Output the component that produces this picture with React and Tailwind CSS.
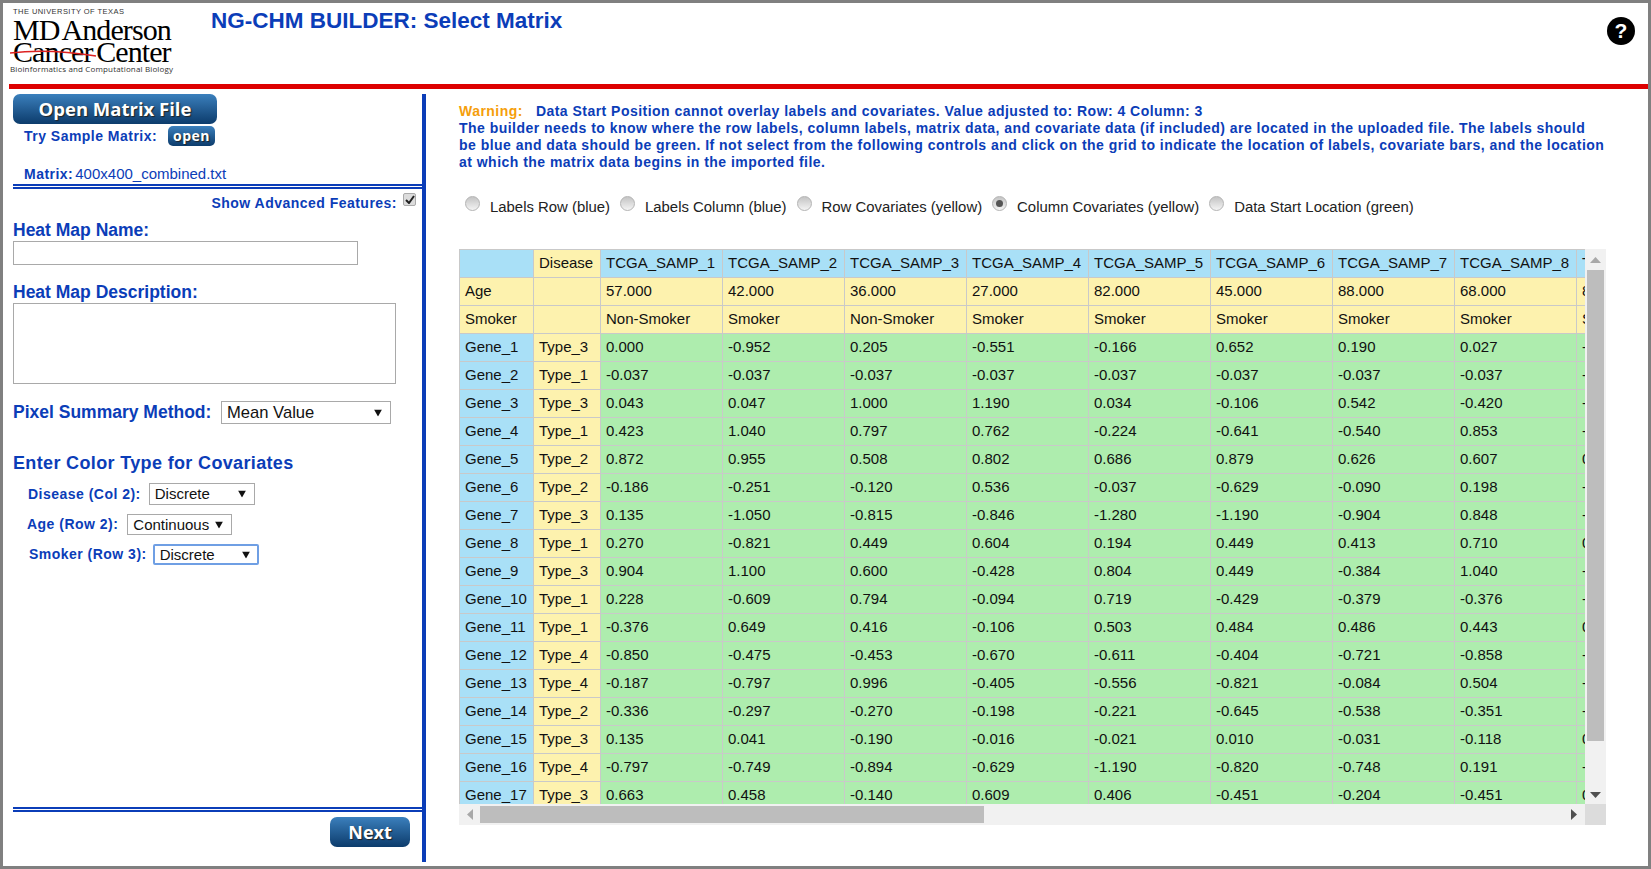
const headers = ["TCGA_SAMP_1", "TCGA_SAMP_2", "TCGA_SAMP_3", "TCGA_SAMP_4", "TCGA_SAMP_5", "TCGA_SAMP_6", "TCGA_SAMP_7", "TCGA_SAMP_8", "TCGA_SAMP_9"];
const age = ["57.000", "42.000", "36.000", "27.000", "82.000", "45.000", "88.000", "68.000", "81.000"];
const smoker = ["Non-Smoker", "Smoker", "Non-Smoker", "Smoker", "Smoker", "Smoker", "Smoker", "Smoker", "Smoker"];

const genes = [
  ["Type_3", "0.000", "-0.952", "0.205", "-0.551", "-0.166", "0.652", "0.190", "0.027", "-0.310"],
  ["Type_1", "-0.037", "-0.037", "-0.037", "-0.037", "-0.037", "-0.037", "-0.037", "-0.037", "-0.037"],
  ["Type_3", "0.043", "0.047", "1.000", "1.190", "0.034", "-0.106", "0.542", "-0.420", "-0.212"],
  ["Type_1", "0.423", "1.040", "0.797", "0.762", "-0.224", "-0.641", "-0.540", "0.853", "-0.145"],
  ["Type_2", "0.872", "0.955", "0.508", "0.802", "0.686", "0.879", "0.626", "0.607", "0.731"],
  ["Type_2", "-0.186", "-0.251", "-0.120", "0.536", "-0.037", "-0.629", "-0.090", "0.198", "-0.402"],
  ["Type_3", "0.135", "-1.050", "-0.815", "-0.846", "-1.280", "-1.190", "-0.904", "0.848", "-0.763"],
  ["Type_1", "0.270", "-0.821", "0.449", "0.604", "0.194", "0.449", "0.413", "0.710", "0.322"],
  ["Type_3", "0.904", "1.100", "0.600", "-0.428", "0.804", "0.449", "-0.384", "1.040", "-0.257"],
  ["Type_1", "0.228", "-0.609", "0.794", "-0.094", "0.719", "-0.429", "-0.379", "-0.376", "-0.188"],
  ["Type_1", "-0.376", "0.649", "0.416", "-0.106", "0.503", "0.484", "0.486", "0.443", "0.275"],
  ["Type_4", "-0.850", "-0.475", "-0.453", "-0.670", "-0.611", "-0.404", "-0.721", "-0.858", "-0.539"],
  ["Type_4", "-0.187", "-0.797", "0.996", "-0.405", "-0.556", "-0.821", "-0.084", "0.504", "-0.366"],
  ["Type_2", "-0.336", "-0.297", "-0.270", "-0.198", "-0.221", "-0.645", "-0.538", "-0.351", "-0.429"],
  ["Type_3", "0.135", "0.041", "-0.190", "-0.016", "-0.021", "0.010", "-0.031", "-0.118", "0.084"],
  ["Type_4", "-0.797", "-0.749", "-0.894", "-0.629", "-1.190", "-0.820", "-0.748", "0.191", "-0.612"],
  ["Type_3", "0.663", "0.458", "-0.140", "0.609", "0.406", "-0.451", "-0.204", "-0.451", "0.117"],
];

const Cell = ({ color, children }) => (
  <td className={`${color} h-[28px] border border-[#c9c9c9] px-[5px] overflow-hidden whitespace-nowrap`}>{children}</td>
);

const Radio = ({ label, checked }) => (
  <>
    <span className="w-[15px] h-[15px] mb-[7px] shrink-0 rounded-full border border-[#b4b4b4] bg-gradient-to-b from-[#c4c4c4] to-[#f4f4f4] flex items-center justify-center">
      {checked && <span className="w-[7px] h-[7px] rounded-full bg-[#555]" />}
    </span>
    <span className="whitespace-nowrap">{label}</span>
  </>
);

const Select = ({ value, className, arrow = "right-[8px]", size = "text-[15px]" }) => (
  <div className={`relative shrink-0 font-normal tracking-normal ${className}`}>
    <select
      defaultValue={value}
      className={`block appearance-none w-full h-full bg-white pl-[5px] ${size} leading-[18px] text-[#111] outline-none`}
    >
      <option>{value}</option>
    </select>
    <svg className={`absolute ${arrow} top-1/2 -translate-y-1/2`} width="8" height="7" viewBox="0 0 8 7">
      <path d="M0 0h8L4 7z" fill="#111" />
    </svg>
  </div>
);

const DoubleLine = () => <div className="h-[5px] border-y-2 border-[#0b3db8]" />;

const BlueButton = ({ children, className }) => (
  <button className={`bg-gradient-to-b from-[#3b80bd] to-[#0c3c6c] text-white font-bold font-['Open_Sans',sans-serif] [text-shadow:1px_1px_1px_#222] ${className}`}>
    {children}
  </button>
);

const App = () => {
  return (
    <div className="w-[1651px] h-[869px] border-[3px] border-[#808080] bg-white flex flex-col overflow-hidden font-['Liberation_Sans',Arial,sans-serif] text-[15px] text-[#222]">
      {/* header */}
      <div className="h-[81px] flex shrink-0">
        <div className="relative w-[201px] ml-[7px] text-black">
          <div className="pl-[3px] pt-[5px] h-[15px] text-[7.5px] leading-[8px] tracking-[0.45px] text-[#333] whitespace-nowrap">THE UNIVERSITY OF TEXAS</div>
          <div className="pl-[3px] h-[24px] font-['Liberation_Serif',serif] text-[30px] leading-[24px] tracking-[-0.9px] [word-spacing:-3px] whitespace-nowrap">MD Anderson</div>
          <div className="pl-[3px] h-[20px] font-['Liberation_Serif',serif] text-[30px] leading-[20px] tracking-[-0.9px] [word-spacing:-3px] whitespace-nowrap">Cancer Center</div>
          <div className="mt-[2px] text-[8px] leading-[9px] tracking-[0.15px] text-[#333] whitespace-nowrap font-['Open_Sans',sans-serif]">Bioinformatics and Computational Biology</div>
          <svg className="absolute left-0 top-[46px]" width="90" height="10" viewBox="0 0 90 10">
            <path d="M0 4 C 25 1, 55 2, 86 7" stroke="#d22" strokeWidth="1.6" fill="none" />
          </svg>
        </div>
        <h1 className="h-[36px] leading-[36px] text-[22.5px] font-bold text-[#0b3db8] whitespace-nowrap">NG-CHM BUILDER: Select Matrix</h1>
        <div className="ml-auto mr-[13px] mt-[14px] w-[28px] h-[28px] rounded-full bg-black text-white flex items-center justify-center font-bold text-[21px]">?</div>
      </div>
      <div className="ml-[6px] h-[5px] bg-[#dd0000] shrink-0" />

      <div className="flex flex-1 min-h-0">
        {/* left panel */}
        <aside className="w-[423px] shrink-0 mt-[5px] mb-[4px] border-r-4 border-[#0b3db8] pl-[10px] flex flex-col text-[#0b3db8] font-bold">
          <BlueButton className="w-[204px] h-[30px] rounded-[7px] text-[18.5px] leading-[30px]">Open Matrix File</BlueButton>
          <div className="mt-[2px] h-[20px] pl-[11px] flex items-center text-[14px] tracking-[0.48px]">
            <span className="w-[144px]">Try Sample Matrix:</span>
            <BlueButton className="w-[47px] h-[20px] rounded-[5px] text-[14px] leading-[20px]">open</BlueButton>
          </div>
          <div className="mt-[18px] h-[20px] pl-[11px] flex items-center text-[14px] gap-[2px]">
            <span className="tracking-[0.48px]">Matrix:</span>
            <span className="font-normal text-[15px]">400x400_combined.txt</span>
          </div>
          <DoubleLine />
          <div className="h-[28px] pr-[6px] flex items-center justify-end text-[14px] tracking-[0.48px]">
            <span>Show Advanced Features:</span>
            <span className="ml-[6px] mb-[7px] w-[13px] h-[13px] rounded-[2px] border border-[#aaa] bg-[#dcdcdc] flex items-center justify-center">
              <svg width="10" height="9" viewBox="0 0 10 9">
                <path d="M1 5l3 3 5-7" stroke="#222" strokeWidth="2" fill="none" />
              </svg>
            </span>
          </div>
          <label className="h-[24px] leading-[26px] text-[17.5px]">Heat Map Name:</label>
          <input className="w-[345px] h-[24px] border border-[#a9a9a9] bg-white outline-none" />
          <label className="mt-[15px] h-[23px] leading-[25px] text-[17.5px]">Heat Map Description:</label>
          <textarea className="w-[383px] h-[81px] border border-[#a9a9a9] bg-white outline-none resize-none" />
          <div className="mt-[17px] h-[23px] flex items-center text-[17.5px]">
            <span className="w-[208px] whitespace-nowrap">Pixel Summary Method:</span>
            <Select value="Mean Value" size="text-[16.6px]" className="w-[170px] h-[23px] border border-[#a9a9a9]" />
          </div>
          <div className="mt-[27px] h-[24px] leading-[24px] text-[18px] tracking-[0.35px]">Enter Color Type for Covariates</div>
          <div className="mt-[8px] h-[22px] pl-[15px] flex items-center gap-[8px] text-[14px] tracking-[0.48px]">
            <span className="whitespace-nowrap">Disease (Col 2):</span>
            <Select value="Discrete" className="w-[106px] h-[22px] border border-[#a9a9a9]" />
          </div>
          <div className="mt-[9px] h-[21px] pl-[14px] flex items-center gap-[9px] text-[14px] tracking-[0.48px]">
            <span className="whitespace-nowrap">Age (Row 2):</span>
            <Select value="Continuous" className="w-[105px] h-[21px] border border-[#a9a9a9]" />
          </div>
          <div className="mt-[9px] h-[21px] pl-[16px] flex items-center gap-[6px] text-[14px] tracking-[0.48px]">
            <span className="whitespace-nowrap">Smoker (Row 3):</span>
            <Select value="Discrete" arrow="right-[7px]" className="w-[106px] h-[21px] border-2 border-[#6f9fe4] rounded-[2px]" />
          </div>
          <div className="flex-1" />
          <DoubleLine />
          <div className="mt-[5px] mb-[15px] pr-[12px] flex justify-end">
            <BlueButton className="w-[80px] h-[30px] rounded-[7px] text-[18px] leading-[30px]">Next</BlueButton>
          </div>
        </aside>

        {/* right panel */}
        <main className="flex-1 min-w-0 pl-[33px] pt-[14px]">
          <div className="text-[14px] leading-[17px] font-bold text-[#0b3db8] tracking-[0.47px] whitespace-nowrap">
            <div>
              <span className="text-[#f59e0b] mr-[13px]">Warning:</span>
              Data Start Position cannot overlay labels and covariates. Value adjusted to: Row: 4 Column: 3
            </div>
            <div>The builder needs to know where the row labels, column labels, matrix data, and covariate data (if included) are located in the uploaded file. The labels should</div>
            <div>be blue and data should be green. If not select from the following controls and click on the grid to indicate the location of labels, covariate bars, and the location</div>
            <div>at which the matrix data begins in the imported file.</div>
          </div>

          <div className="mt-[25px] h-[22px] pl-[6px] flex items-center gap-[10px] text-[14.9px]">
            <Radio label="Labels Row (blue)" />
            <Radio label="Labels Column (blue)" />
            <Radio label="Row Covariates (yellow)" />
            <Radio label="Column Covariates (yellow)" checked />
            <Radio label="Data Start Location (green)" />
          </div>

          <div className="mt-[31px] w-[1147px]">
            <div className="flex h-[555px]">
              <div className="w-[1126px] h-full overflow-hidden">
                <table className="table-fixed border-collapse w-[1239px] text-[15px] text-[#111]">
                  <colgroup>
                    <col className="w-[74px]" />
                    <col className="w-[67px]" />
                    {headers.map((h) => (
                      <col key={h} className="w-[122px]" />
                    ))}
                  </colgroup>
                  <tbody>
                    <tr>
                      <Cell color="bg-[#a9e0f7]" />
                      <Cell color="bg-[#fdf2ae]">Disease</Cell>
                      {headers.map((h) => (
                        <Cell key={h} color="bg-[#a9e0f7]">{h}</Cell>
                      ))}
                    </tr>
                    <tr>
                      <Cell color="bg-[#fdf2ae]">Age</Cell>
                      <Cell color="bg-[#fdf2ae]" />
                      {age.map((a, i) => (
                        <Cell key={i} color="bg-[#fdf2ae]">{a}</Cell>
                      ))}
                    </tr>
                    <tr>
                      <Cell color="bg-[#fdf2ae]">Smoker</Cell>
                      <Cell color="bg-[#fdf2ae]" />
                      {smoker.map((s, i) => (
                        <Cell key={i} color="bg-[#fdf2ae]">{s}</Cell>
                      ))}
                    </tr>
                    {genes.map((row, i) => (
                      <tr key={i}>
                        <Cell color="bg-[#a9e0f7]">Gene_{i + 1}</Cell>
                        <Cell color="bg-[#fdf2ae]">{row[0]}</Cell>
                        {row.slice(1).map((v, j) => (
                          <Cell key={j} color="bg-[#aeedae]">{v}</Cell>
                        ))}
                      </tr>
                    ))}
                  </tbody>
                </table>
              </div>
              {/* vertical scrollbar */}
              <div className="w-[21px] bg-[#f1f1f1] flex flex-col items-center">
                <div className="h-[21px] flex items-center justify-center">
                  <svg width="11" height="6" viewBox="0 0 11 6"><path d="M5.5 0L11 6H0z" fill="#a8a8a8" /></svg>
                </div>
                <div className="w-[17px] h-[471px] bg-[#bdbdbd]" />
                <div className="flex-1 w-full flex items-end justify-center pb-[6px]">
                  <svg width="11" height="6" viewBox="0 0 11 6"><path d="M0 0h11L5.5 6z" fill="#505050" /></svg>
                </div>
              </div>
            </div>
            {/* horizontal scrollbar */}
            <div className="flex h-[21px]">
              <div className="w-[1126px] bg-[#f1f1f1] flex items-center">
                <div className="w-[21px] flex justify-center">
                  <svg width="6" height="11" viewBox="0 0 6 11"><path d="M6 0v11L0 5.5z" fill="#a8a8a8" /></svg>
                </div>
                <div className="w-[504px] h-[17px] bg-[#bdbdbd]" />
                <div className="flex-1 flex justify-end pr-[8px]">
                  <svg width="6" height="11" viewBox="0 0 6 11"><path d="M0 0v11l6-5.5z" fill="#505050" /></svg>
                </div>
              </div>
              <div className="w-[21px] bg-[#dcdcdc]" />
            </div>
          </div>
        </main>
      </div>
    </div>
  );
};

export default App;
